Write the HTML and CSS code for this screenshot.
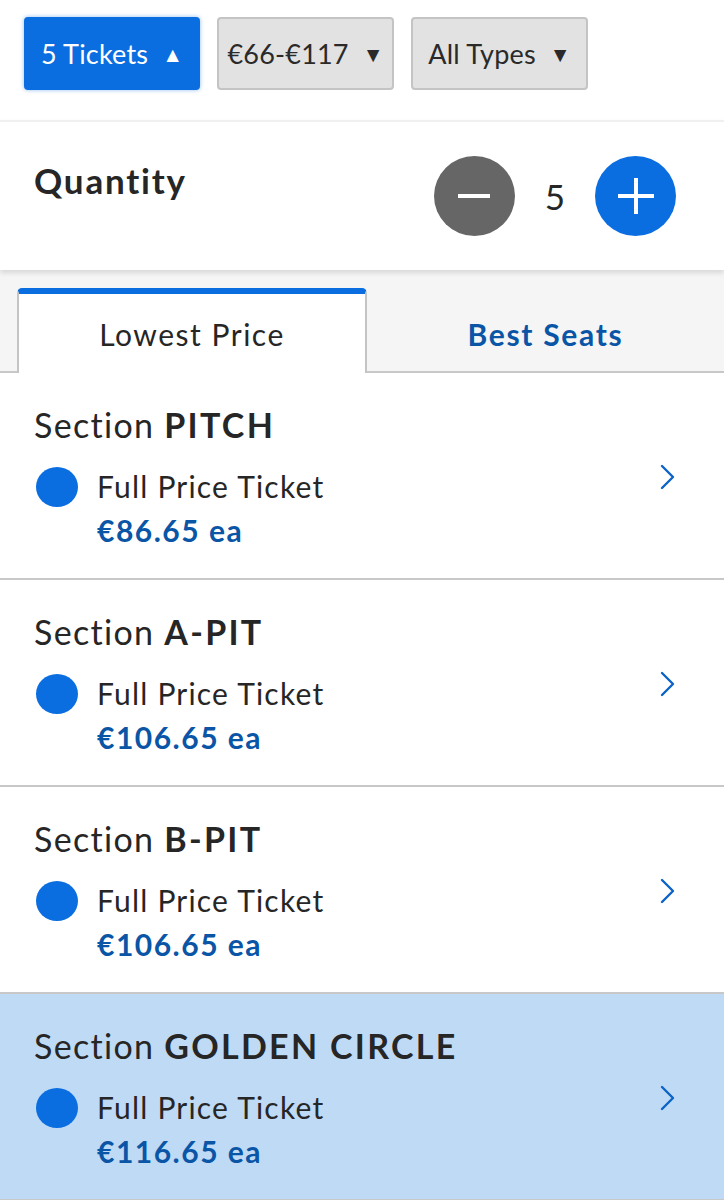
FILE: index.html
```html
<!DOCTYPE html>
<html>
<head>
<meta charset="utf-8">
<link rel="stylesheet" href="styles.css">
</head>
<body>
<div class="filters">
  <button class="fbtn fbtn-active">5 Tickets <span class="caret">▲</span></button>
  <button class="fbtn">€66-€117 <span class="caret">▼</span></button>
  <button class="fbtn">All Types <span class="caret">▼</span></button>
</div>
<div class="qty">
  <div class="qty-label">Quantity</div>
  <div class="stepper">
    <span class="circle circle-minus"><svg width="36" height="36" viewBox="0 0 36 36"><path d="M2 18H34" stroke="#fff" stroke-width="4"/></svg></span>
    <span class="qty-num">5</span>
    <span class="circle circle-plus"><svg width="40" height="40" viewBox="0 0 40 40"><path d="M2 20H38M20 2V38" stroke="#fff" stroke-width="4"/></svg></span>
  </div>
</div>
<div class="tabs">
  <div class="tab tab-active">Lowest Price</div>
  <div class="tab tab-other">Best Seats</div>
</div>
<div class="list">
  <div class="row">
    <div class="info">
      <div class="title">Section <b>PITCH</b></div>
      <div class="ticket"><span class="dot"></span><div><div class="tname">Full Price Ticket</div><div class="price">€86.65 ea</div></div></div>
    </div>
    <svg class="chev" width="16" height="26" viewBox="0 0 16 26"><path d="M2 2L13 13L2 24" fill="none" stroke="#0b63c8" stroke-width="2.4" stroke-linecap="round" stroke-linejoin="round"/></svg>
  </div>
  <div class="row">
    <div class="info">
      <div class="title">Section <b>A-PIT</b></div>
      <div class="ticket"><span class="dot"></span><div><div class="tname">Full Price Ticket</div><div class="price">€106.65 ea</div></div></div>
    </div>
    <svg class="chev" width="16" height="26" viewBox="0 0 16 26"><path d="M2 2L13 13L2 24" fill="none" stroke="#0b63c8" stroke-width="2.4" stroke-linecap="round" stroke-linejoin="round"/></svg>
  </div>
  <div class="row">
    <div class="info">
      <div class="title">Section <b>B-PIT</b></div>
      <div class="ticket"><span class="dot"></span><div><div class="tname">Full Price Ticket</div><div class="price">€106.65 ea</div></div></div>
    </div>
    <svg class="chev" width="16" height="26" viewBox="0 0 16 26"><path d="M2 2L13 13L2 24" fill="none" stroke="#0b63c8" stroke-width="2.4" stroke-linecap="round" stroke-linejoin="round"/></svg>
  </div>
  <div class="row row-selected">
    <div class="info">
      <div class="title">Section <b>GOLDEN CIRCLE</b></div>
      <div class="ticket"><span class="dot"></span><div><div class="tname">Full Price Ticket</div><div class="price">€116.65 ea</div></div></div>
    </div>
    <svg class="chev" width="16" height="26" viewBox="0 0 16 26"><path d="M2 2L13 13L2 24" fill="none" stroke="#0b63c8" stroke-width="2.4" stroke-linecap="round" stroke-linejoin="round"/></svg>
  </div>
</div>
</body>
</html>
```
FILE: styles.css
```css
* { box-sizing: border-box; }
body {
  margin: 0;
  font-family: Lato, "Noto Sans", sans-serif;
  color: #262626;
  background: #fff;
}
.filters {
  display: flex;
  gap: 17px;
  padding: 17px 24px 0;
  height: 120px;
}
.fbtn {
  width: 177px;
  height: 73px;
  border-radius: 4px;
  border: 2px solid #c4c4c4;
  background: #e2e2e2;
  color: #2a2a2a;
  font-family: inherit;
  font-size: 27px;
  letter-spacing: 0.2px;
  padding: 0;
  display: flex;
  align-items: center;
  justify-content: center;
  gap: 14px;
}
.fbtn-active {
  width: 176px;
  background: #0b6ee0;
  border-color: #0b6ee0;
  color: #fff;
  box-shadow: 0 0 4px rgba(11,110,224,0.45);
}
.caret { font-size: 21px; letter-spacing: 0; }
.qty {
  height: 150px;
  border-top: 2px solid #f0f0f0;
  display: flex;
  justify-content: space-between;
  padding: 0 48px 0 34px;
  box-shadow: 0 3px 5px rgba(0,0,0,0.12);
  position: relative;
  z-index: 1;
  background: #fff;
}
.qty-label {
  font-size: 35px;
  font-weight: 700;
  letter-spacing: 1.8px;
  margin-top: 37px;
}
.stepper {
  display: flex;
  align-items: center;
  gap: 30px;
}
.circle {
  width: 81px;
  height: 80px;
  border-radius: 50%;
  display: flex;
  align-items: center;
  justify-content: center;
}
.circle-minus { background: #666; }
.circle-plus { background: #0b6ee0; }
.qty-num { font-size: 35px; }
.tabs {
  height: 103px;
  background: #f5f5f5;
  border-bottom: 2px solid #c8c8c8;
  padding-top: 18px;
  display: flex;
}
.tab {
  font-size: 30px;
  display: flex;
  align-items: center;
  justify-content: center;
}
.tab-active {
  margin-left: 17px;
  width: 350px;
  background: #fff;
  border-top: 6px solid #0b6ee0;
  border-left: 2px solid #c4c4c4;
  border-right: 2px solid #c4c4c4;
  border-radius: 5px 5px 0 0;
  margin-bottom: -2px;
  letter-spacing: 1.5px;
}
.tab-other {
  flex: 1;
  font-weight: 700;
  color: #0a55a6;
  letter-spacing: 1.7px;
  padding-top: 8px;
}
.row {
  height: 207px;
  border-bottom: 2px solid #c8c8c8;
  display: flex;
  align-items: center;
  justify-content: space-between;
  padding: 0 48px 0 34px;
}
.row-selected { background: #bfdaf5; }
.info { padding-top: 5px; }
.title { font-size: 34px; letter-spacing: 1.3px; }
.title b { font-weight: 700; letter-spacing: 2.3px; }
.ticket {
  display: flex;
  align-items: flex-start;
  gap: 19px;
  margin-top: 19px;
}
.dot {
  width: 42px;
  height: 40px;
  border-radius: 50%;
  background: #0b6ee0;
  margin-top: 3px;
  margin-left: 2px;
}
.tname { font-size: 30px; line-height: 44px; letter-spacing: 1.2px; }
.price {
  font-size: 30px;
  font-weight: 700;
  color: #0a55a6;
  line-height: 45px;
  letter-spacing: 1.5px;
}
.chev { margin-top: 2px; }
```
